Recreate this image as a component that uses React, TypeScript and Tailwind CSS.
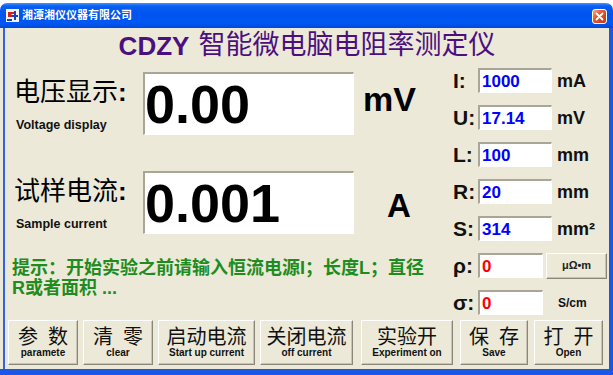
import React from "react";

const F = "font-['Liberation_Sans','Noto_Sans_CJK_SC',sans-serif]";

const sunken =
  "bg-white border-t-2 border-l-2 border-b border-r border-t-[#a9a697] border-l-[#a9a697] border-b-white border-r-white";

const raised =
  "bg-[#ece9d8] border border-t-white border-l-white border-b-[#8a877a] border-r-[#8a877a] shadow-[inset_-1px_-1px_0_#c7c4b5]";

function AppIcon() {
  return (
    <svg width="13" height="13" viewBox="0 0 13 13">
      <rect x="0" y="0" width="13" height="13" fill="#f4f4f4" />
      <path d="M2 3h6v2H5l3 3H2z" fill="#d81e1e" />
      <path d="M9 2v9M6 7h6" stroke="#1c3fbf" strokeWidth="2" />
      <rect x="1" y="10" width="5" height="2" fill="#1c3fbf" />
    </svg>
  );
}

function TitleBar() {
  return (
    <div className="flex h-[25px] items-center rounded-t-[7px] bg-[linear-gradient(180deg,#3d95ff_0%,#0a5ff2_12%,#0053ee_45%,#0058f2_80%,#0049d8_100%)] pl-[6px] pr-[6px]">
      <AppIcon />
      <span className={`ml-[3px] text-[11px] font-bold leading-none text-white ${F}`}>
        湘潭湘仪仪器有限公司
      </span>
      <div className="ml-auto mt-[2px] flex h-[15px] w-[15px] items-center justify-center rounded-[3px] border border-white bg-[linear-gradient(135deg,#f3a98c_0%,#e3582d_40%,#c63810_100%)]">
        <svg width="9" height="9" viewBox="0 0 9 9">
          <path d="M1.5 1.5l6 6M7.5 1.5l-6 6" stroke="#fff" strokeWidth="1.8" strokeLinecap="round" />
        </svg>
      </div>
    </div>
  );
}

interface ParamRow {
  label: string;
  value: string;
  unit: string;
  color: string;
  narrow?: boolean;
  button?: boolean;
}

const params: ParamRow[] = [
  { label: "I:", value: "1000", unit: "mA", color: "text-[#0000ff]" },
  { label: "U:", value: "17.14", unit: "mV", color: "text-[#0000ff]" },
  { label: "L:", value: "100", unit: "mm", color: "text-[#0000ff]" },
  { label: "R:", value: "20", unit: "mm", color: "text-[#0000ff]" },
  { label: "S:", value: "314", unit: "mm²", color: "text-[#0000ff]" },
  { label: "ρ:", value: "0", unit: "μΩ•m", color: "text-[#ff0000]", narrow: true, button: true },
  { label: "σ:", value: "0", unit: "S/cm", color: "text-[#ff0000]", narrow: true },
];

const buttons = [
  { zh: ["参", "数"], en: "paramete", w: "w-[70px]", ml: "ml-[3px]" },
  { zh: ["清", "零"], en: "clear", w: "w-[70px]", ml: "ml-[5px]" },
  { zh: ["启动电流"], en: "Start up current", w: "w-[97px]", ml: "ml-[5px]" },
  { zh: ["关闭电流"], en: "off current", w: "w-[93px]", ml: "ml-[5px]" },
  { zh: ["实验开"], en: "Experiment on", w: "w-[92px]", ml: "ml-[8px]" },
  { zh: ["保", "存"], en: "Save", w: "w-[68px]", ml: "ml-[7px]" },
  { zh: ["打", "开"], en: "Open", w: "w-[69px]", ml: "ml-[6px]" },
];

function Reading({ label, sub, value, unit, unitClass }: { label: string; sub: string; value: string; unit: string; unitClass: string }) {
  return (
    <div className="flex h-[63px]">
      <div className="w-[138px] pl-[9px] pt-[5px]">
        <div className="text-[26px] leading-[30px] text-black">
          {label}
          <span className="font-bold">:</span>
        </div>
        <div className="ml-[2px] mt-[11px] text-[12.5px] font-bold leading-[14px] text-[#111]">{sub}</div>
      </div>
      <div className={`flex h-full w-[211px] items-center ${sunken}`}>
        <span className="text-[54px] font-bold leading-none text-black">{value}</span>
      </div>
      <div className={`font-bold leading-[36px] text-black ${unitClass}`}>{unit}</div>
    </div>
  );
}

export default function App() {
  return (
    <div className={`h-[375px] w-[613px] overflow-hidden bg-white ${F}`}>
      <div className="mt-[3px] flex h-[372px] flex-col">
        <TitleBar />
        <div className="flex h-[347px] flex-col border-b-[6px] border-r-4 border-[#1957e4] bg-[#ece9d8] pl-[3px]">
          <div className="flex flex-1 flex-col border-l-2 border-[#2f65e0]">
            {/* heading */}
            <div className="flex h-[35px] items-center justify-center text-[#4b0f80]">
              <span className="text-[26px] font-bold leading-none">CDZY</span>
              <span className="ml-[9px] text-[27px] leading-none">智能微电脑电阻率测定仪</span>
            </div>

            <div className="flex h-[257px]">
              {/* left readings */}
              <div className="flex w-[440px] flex-col">
                <div className="mt-[9px]">
                  <Reading label="电压显示" sub="Voltage display" value="0.00" unit="mV" unitClass="ml-[9px] mt-[9px] text-[34px]" />
                </div>
                <div className="mt-[36px]">
                  <Reading label="试样电流" sub="Sample current" value="0.001" unit="A" unitClass="ml-[33px] mt-[17px] text-[33px]" />
                </div>
                <div className="mt-[24px] pl-[7px] text-[18px] font-bold leading-[20px] text-[#1e8c1e]">
                  提示：开始实验之前请输入恒流电源I；长度L；直径
                  <br />
                  R或者面积 ...
                </div>
              </div>

              {/* right parameters */}
              <div className="flex flex-1 flex-col gap-[12px] pt-[5px]">
                {params.map((p) => (
                  <div key={p.label} className="flex h-[25px] items-center">
                    <div className="w-[33px] pl-[8px] text-[21px] font-bold leading-none text-[#111]">{p.label}</div>
                    <div className={`flex h-full items-center pl-[2px] ${p.narrow ? "w-[65px]" : "w-[74px]"} ${sunken}`}>
                      <span className={`text-[17px] font-bold leading-none ${p.color}`}>{p.value}</span>
                    </div>
                    {p.button ? (
                      <div className={`ml-[3px] flex h-[26px] w-[61px] items-center justify-center text-[11px] font-bold text-[#222] ${raised}`}>
                        {p.unit}
                      </div>
                    ) : (
                      <div className={`${p.narrow ? "ml-[15px] text-[12px]" : "ml-[5px] text-[18px]"} font-bold leading-none text-[#111]`}>
                        {p.unit}
                      </div>
                    )}
                  </div>
                ))}
              </div>
            </div>

            {/* button row */}
            <div className="flex h-[45px]">
              {buttons.map((b) => (
                <div key={b.en} className={`flex h-full flex-col items-center pt-[6px] ${b.w} ${b.ml} ${raised}`}>
                  <div className="flex text-[20px] leading-[20px] text-[#111]">
                    {b.zh.map((c, i) => (
                      <span key={c} className={i > 0 ? "ml-[10px]" : ""}>
                        {c}
                      </span>
                    ))}
                  </div>
                  <div className="text-[10px] font-bold leading-[11px] text-[#111]">{b.en}</div>
                </div>
              ))}
            </div>
          </div>
        </div>
      </div>
    </div>
  );
}
